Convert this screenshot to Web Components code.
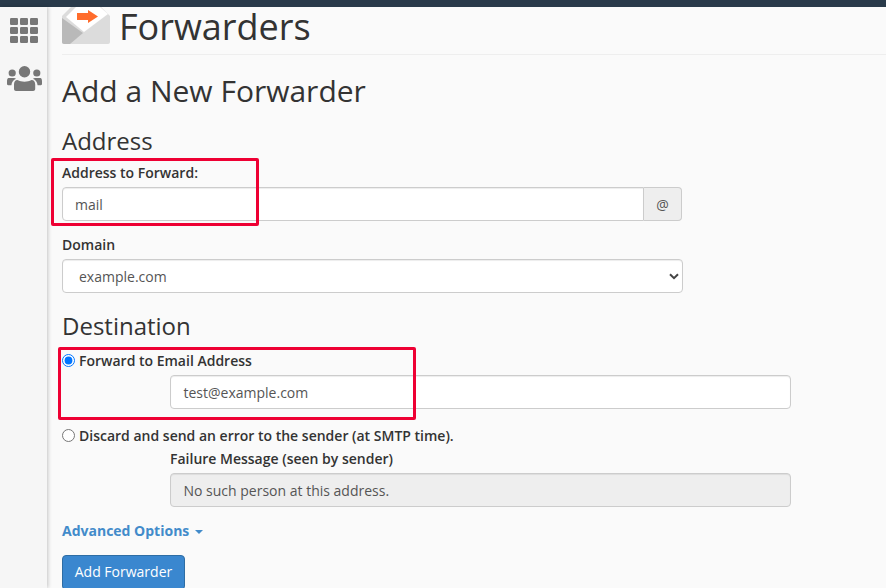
<!DOCTYPE html>
<html>
<head>
<meta charset="utf-8">
<title>Forwarders</title>
<style>
  html, body { margin: 0; height: 588px; overflow: hidden; background: #fafafa; }
  body { font-family: "Open Sans", "Liberation Sans", sans-serif; font-size: 14px; color: #333; }
</style>
</head>
<body>
<cp-shell>
  <cp-sidebar slot="side"></cp-sidebar>
  <cp-header title="Forwarders"></cp-header>
  <forwarder-form></forwarder-form>
</cp-shell>
<script>
class CpShell extends HTMLElement {
  constructor () {
    super()
    this.attachShadow({ mode: 'open' }).innerHTML =
`<style>
  :host { display: block; height: 588px; overflow: hidden; }
  .top { height: 7px; background: #293a4a; }
  .body { display: flex; height: 581px; }
  main { flex: 1; min-width: 0; padding-left: 15px; }
</style>
<div class="top"></div>
<div class="body">
  <slot name="side"></slot>
  <main><slot></slot></main>
</div>`
  }
}
customElements.define('cp-shell', CpShell)

class CpSidebar extends HTMLElement {
  constructor () {
    super()
    this.attachShadow({ mode: 'open' }).innerHTML =
`<style>
  :host {
    display: flex;
    flex-direction: column;
    align-items: center;
    box-sizing: border-box;
    width: 47px;
    padding-left: 1px;
    flex: none;
    background: #f6f6f6;
    box-shadow: 1px 0 4px rgba(0,0,0,.22);
    color: #777;
  }
  svg { display: block; fill: currentColor; }
  .grid { margin-top: 11px; }
  .users { margin: 23px 0 0 1px; }
</style>
<svg class="grid" width="28" height="25" viewBox="0 0 28 25">
  <rect x="0" y="0" width="8" height="7" rx="1.2"/><rect x="10" y="0" width="8" height="7" rx="1.2"/><rect x="20" y="0" width="8" height="7" rx="1.2"/>
  <rect x="0" y="9" width="8" height="7" rx="1.2"/><rect x="10" y="9" width="8" height="7" rx="1.2"/><rect x="20" y="9" width="8" height="7" rx="1.2"/>
  <rect x="0" y="18" width="8" height="7" rx="1.2"/><rect x="10" y="18" width="8" height="7" rx="1.2"/><rect x="20" y="18" width="8" height="7" rx="1.2"/>
</svg>
<svg class="users" width="35" height="25" viewBox="0 0 35 25">
  <circle cx="17.500" cy="5.700" r="5.700"/>
  <circle cx="5.200" cy="7" r="3.600"/>
  <circle cx="29.800" cy="7" r="3.600"/>
  <path d="M10.500 14c2 1.200 4.500 1.700 7 1.700s5-.5 7-1.700c2.500 0 3.700 2 3.700 4.500V23c0 1.200-.9 2-2 2H9c-1.100 0-2-.8-2-2v-4.500c0-2.500 1.200-4.500 3.500-4.500z"/>
  <path d="M1.500 12H7c.8 0 1.500.3 2 .8-2.600 1.200-4.300 3.500-4.600 6.400H1.200C.5 19.200 0 18.700 0 18v-2.500C0 13.500.6 12 1.500 12z"/>
  <path d="M33.500 12H28c-.8 0-1.500.3-2 .8 2.600 1.200 4.300 3.500 4.600 6.400h3.200c.7 0 1.200-.5 1.200-1.200v-2.500c0-2-.6-3.500-1.500-3.500z"/>
</svg>`
  }
}
customElements.define('cp-sidebar', CpSidebar)

class CpHeader extends HTMLElement {
  constructor () {
    super()
    this.attachShadow({ mode: 'open' }).innerHTML =
`<style>
  :host {
    display: flex;
    align-items: flex-start;
    height: 47px;
    border-bottom: 1px solid #eee;
  }
  svg { display: block; flex: none; }
  h1 {
    margin: 0 0 0 9px;
    font-size: 36px;
    font-weight: 400;
    line-height: 40px;
    color: #333;
  }
</style>
<svg width="48" height="37" viewBox="0 0 48 37">
  <path d="M0 9 9 0h30l9 9v26c0 1.100-.9 2-2 2H2c-1.100 0-2-.9-2-2z" fill="#dcdcdc"/>
  <path d="M0 11 21 26 8 37H2c-1.100 0-2-.9-2-2z" fill="#b9b9b9"/>
  <path d="M4 10 14 0h24l8 7-24 18z" fill="#fff"/>
  <path d="M15 6h11V3l10 6.500L26 16v-3H15z" fill="#ff6c2c"/>
</svg>
<h1></h1>`
    this.shadowRoot.querySelector('h1').textContent = this.getAttribute('title')
  }
}
customElements.define('cp-header', CpHeader)

class CpField extends HTMLElement {
  constructor () {
    super()
    this.attachShadow({ mode: 'open' }).innerHTML =
`<style>
  :host { display: flex; height: 34px; box-sizing: border-box; font-size: 14px; color: #555; }
  .box {
    flex: 1;
    display: flex;
    align-items: center;
    min-width: 0;
    padding: 0 12px;
    background: #fff;
    border: 1px solid #ccc;
    border-radius: 4px;
    box-shadow: inset 0 1px 1px rgba(0,0,0,.075);
  }
  :host([disabled]) .box { background: #eee; }
  :host([wide]) .box { padding-left: 12.5px; }
  :host([addon]) .box { border-radius: 4px 0 0 4px; }
  .addon {
    display: none;
    align-items: center;
    justify-content: center;
    flex: none;
    width: 37px;
    background: #eee;
    border: 1px solid #ccc;
    border-left: 0;
    border-radius: 0 4px 4px 0;
  }
  :host([addon]) .addon { display: flex; }
  .chev { display: none; margin-left: auto; margin-right: -9px; }
  :host([select]) .chev { display: block; }
  :host([select]) .box { padding-left: 16px; }
</style>
<div class="box"><slot></slot>
  <svg class="chev" width="10" height="7" viewBox="0 0 10 7"><path d="M1 1.200 5 5.200 9 1.200" fill="none" stroke="#444" stroke-width="2"/></svg>
</div>
<div class="addon"></div>`
    this.shadowRoot.querySelector('.addon').textContent = this.getAttribute('addon') || ''
  }
}
customElements.define('cp-field', CpField)

class CpRadio extends HTMLElement {
  constructor () {
    super()
    this.attachShadow({ mode: 'open' }).innerHTML =
`<style>
  :host { display: flex; align-items: center; font-weight: 600; font-size: 14px; line-height: 20px; color: #333; }
  input { width: 13px; height: 13px; margin: 0 4px 0 0; accent-color: #0075ff; position: relative; top: -1px; }
</style>
<input type="radio" name="dest"><span><slot></slot></span>`
    this.shadowRoot.querySelector('input').checked = this.hasAttribute('checked')
  }
}
customElements.define('cp-radio', CpRadio)

class ForwarderForm extends HTMLElement {
  constructor () {
    super()
    this.attachShadow({ mode: 'open' }).innerHTML =
`<style>
  :host { display: block; width: 729px; position: relative; padding-top: 18px; }
  h2 { margin: 0; font-size: 30px; font-weight: 400; line-height: 36px; color: #333; }
  h3 { margin: 0; font-size: 24px; font-weight: 400; line-height: 26px; color: #333; }
  label { display: block; font-weight: 600; font-size: 14px; line-height: 20px; color: #333; }
  .addr { margin-top: 19px; }
  .addr label { margin-top: 9px; margin-bottom: 4px; }
  .addr cp-field { width: 620px; }
  .domain { margin-top: 14px; width: 621px; }
  .domain label { margin-bottom: 4px; }
  .dest { margin-top: 20px; }
  .dest cp-radio { margin-top: 12px; }
  .indent { margin-left: 108px; }
  .indent cp-field { width: 621px; }
  .email { margin-top: 4px; }
  .dest .discard { margin-top: 17px; }
  .fail { margin-top: 3px; margin-bottom: 4px; }
  .adv { margin-top: 14px; font-weight: 700; line-height: 20px; color: #428bca; display: flex; align-items: center; }
  .adv i { display: block; margin-left: 6px; margin-top: 1px; border: 4px solid transparent; border-top-color: #428bca; border-bottom: 0; }
  button {
    display: block;
    margin-top: 14px;
    width: 123px;
    height: 35px;
    padding: 0 0 2px;
    background: #3a87cf;
    border: 1px solid #2e6da4;
    border-radius: 4px;
    color: #fff;
    font: 400 14px "Open Sans", "Liberation Sans", sans-serif;
  }
  .mark { position: absolute; box-sizing: border-box; border: 3px solid #ee0033; border-radius: 2px; pointer-events: none; }
  .m1 { left: -11px; top: 103px; width: 208px; height: 68px; }
  .m2 { left: -4px; top: 292px; width: 358px; height: 73px; }
</style>
<h2>Add a New Forwarder</h2>
<section class="addr">
  <h3>Address</h3>
  <label>Address to Forward:</label>
  <cp-field addon="@">mail</cp-field>
</section>
<section class="domain">
  <label>Domain</label>
  <cp-field select>example.com</cp-field>
</section>
<section class="dest">
  <h3>Destination</h3>
  <cp-radio checked>Forward to Email Address</cp-radio>
  <div class="indent email"><cp-field wide>test@example.com</cp-field></div>
  <cp-radio class="discard">Discard and send an error to the sender (at SMTP time).</cp-radio>
  <div class="indent">
    <label class="fail">Failure Message (seen by sender)</label>
    <cp-field disabled wide>No such person at this address.</cp-field>
  </div>
</section>
<div class="adv">Advanced Options<i></i></div>
<button type="button">Add Forwarder</button>
<div class="mark m1"></div>
<div class="mark m2"></div>`
  }
}
customElements.define('forwarder-form', ForwarderForm)
</script>
</body>
</html>
